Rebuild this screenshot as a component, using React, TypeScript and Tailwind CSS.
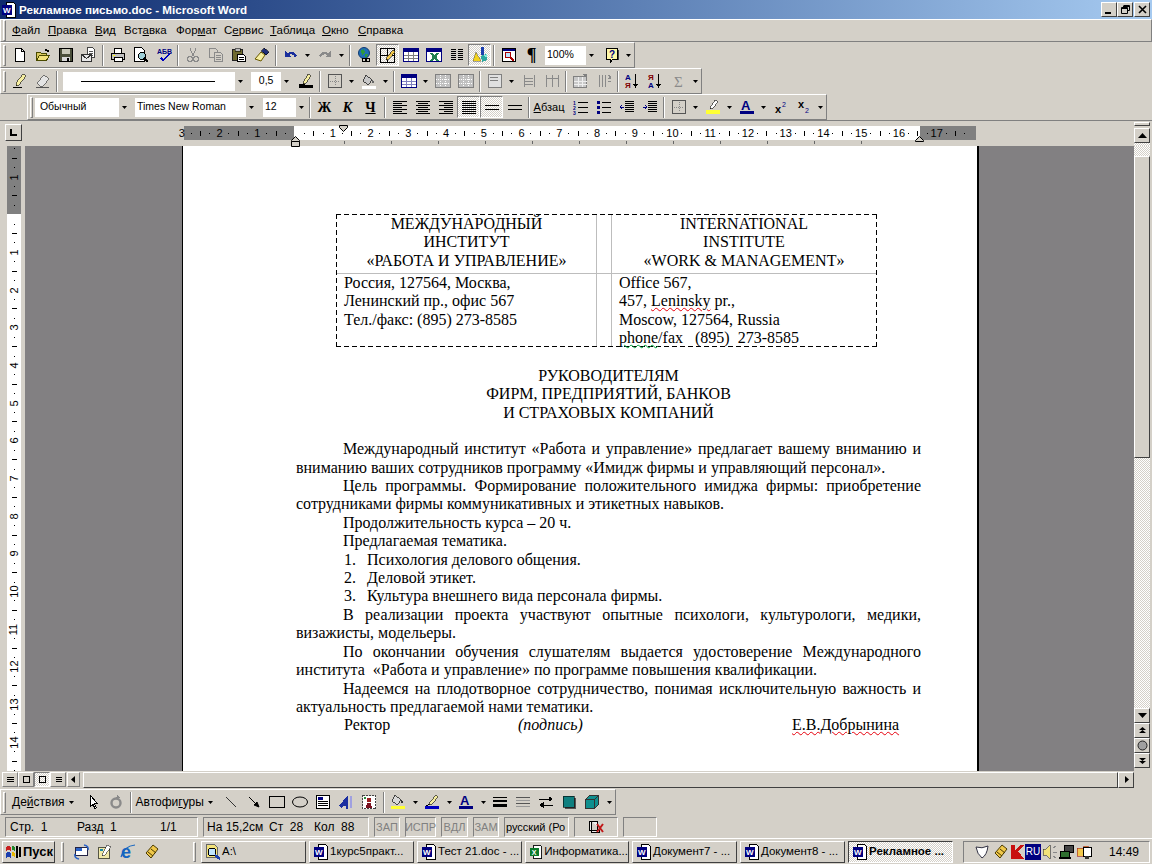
import type { ReactNode } from 'react';

const raised = 'border border-t-white border-l-white border-r-[#808080] border-b-[#808080]';
const raised2 = 'border border-t-white border-l-white border-r-[#404040] border-b-[#404040]';
const sunken = 'border border-t-[#808080] border-l-[#808080] border-r-white border-b-white';
const dither = 'bg-[repeating-conic-gradient(#ffffff_0_25%,#d4d0c8_0_50%)] bg-[length:2px_2px]';

const Svg = ({ children, w = 16, h = 16 }: { children: ReactNode; w?: number; h?: number }) => (
  <svg width={w} height={h} viewBox={`0 0 ${w} ${h}`} shapeRendering="crispEdges">
    {children}
  </svg>
);

const page = (
  <>
    <path d="M3.500 1.500h6l3 3v10h-9z" fill="#fff" stroke="#000" />
    <path d="M9.500 1.500v3h3" fill="none" stroke="#000" />
  </>
);
const lines = (x: number, y: number, w: number, n: number, c = '#000', step = 2) =>
  Array.from({ length: n }, (_, i) => <rect key={i} x={x} y={y + i * step} width={w} height={1} fill={c} />);
const rows = (xs: number[], ws: number[]) =>
  xs.map((x, i) => <rect key={i} x={x} y={2 + i * 2} width={ws[i]} height="1" fill="#000" />);

const icons: Record<string, ReactNode> = {
  new: page,
  open: (
    <>
      <path d="M1.500 5.500h4l1 1h5v7h-10z" fill="#d8c860" stroke="#4a4a00" />
      <path d="M4.500 8.500h10l-3 5h-10z" fill="#f2e27a" stroke="#4a4a00" />
      <path d="M9 3q2-2 4 0l1-1v3h-3l1-1q-1-1-2 0z" fill="#000" />
    </>
  ),
  save: (
    <>
      <path d="M1.500 1.500h13v13h-13z" fill="#4a4f3a" stroke="#000" />
      <rect x="4" y="2" width="8" height="5" fill="#c8c8b8" />
      <rect x="4" y="10" width="8" height="4" fill="#d8d8d8" />
      <rect x="9" y="11" width="2" height="3" fill="#000" />
    </>
  ),
  email: (
    <>
      <path d="M6.500 .5h5l2 2v8h-7z" fill="#fff" stroke="#444" />
      {lines(8, 4, 4, 3, '#555')}
      <path d="M.5 7.500h10v7h-10z" fill="#e8e8e8" stroke="#333" />
      <path d="M.5 7.500l5 4 5-4" fill="none" stroke="#333" />
    </>
  ),
  print: (
    <>
      <path d="M4.500 1.500h7v5h-7z" fill="#fff" stroke="#000" />
      <path d="M1.500 6.500h13v6h-13z" fill="#c0c0c0" stroke="#000" />
      <path d="M4.500 10.500h8v4h-8z" fill="#fff" stroke="#000" />
      <rect x="3" y="8" width="2" height="1" fill="#ff0" />
    </>
  ),
  preview: (
    <>
      <path d="M1.500 .5h7l3 3v11h-10z" fill="#fff" stroke="#000" />
      <circle cx="9" cy="9" r="3.500" fill="#9fd0d8" stroke="#000" />
      <path d="M11 11l4 4" stroke="#000" strokeWidth="2" />
    </>
  ),
  spell: (
    <>
      <text x="1" y="7" fontSize="7" fontFamily="Liberation Sans" fontWeight="700" fill="#000080">АБВ</text>
      <path d="M4 11l3 4 7-8-1-1-6 6-2-2z" fill="#0000c0" />
    </>
  ),
  cut: (
    <>
      <path d="M5 1l3 8M11 1l-3 8" stroke="#8a8a8a" fill="none" />
      <circle cx="5" cy="12" r="2.500" fill="none" stroke="#8a8a8a" strokeWidth="1.500" />
      <circle cx="11" cy="12" r="2.500" fill="none" stroke="#8a8a8a" strokeWidth="1.500" />
    </>
  ),
  copy: (
    <>
      <path d="M1.500 1.500h6l2 2v7h-8z" fill="#d4d0c8" stroke="#8a8a8a" />
      <path d="M6.500 5.500h6l2 2v7h-8z" fill="#d4d0c8" stroke="#8a8a8a" />
      {lines(8, 8, 5, 3, '#8a8a8a')}
    </>
  ),
  paste: (
    <>
      <path d="M1.500 2.500h10v11h-10z" fill="#6f6a30" stroke="#222" />
      <rect x="4" y="1" width="5" height="3" fill="#bbb" stroke="#000" strokeWidth=".5" />
      <path d="M6.500 7.500h6l2 2v5h-8z" fill="#fff" stroke="#000" />
      {lines(8, 10, 5, 2, '#000')}
    </>
  ),
  painter: (
    <>
      <path d="M10 1l5 4-3 3-5-4z" fill="#1f2f78" stroke="#000" strokeWidth=".6" />
      <path d="M7 5l4 3-4 6-6-2z" fill="#f6eea0" stroke="#6a5a00" shapeRendering="auto" />
    </>
  ),
  undo: <path d="M2 4v6h6l-2-2q3-2 6 2l2-1Q10 2 5 6z" fill="#1a2e9c" />,
  redo: <path d="M14 4v6H8l2-2q-3-2-6 2L2 9q4-7 9-3z" fill="#8a8a8a" />,
  web: (
    <>
      <circle cx="7" cy="6" r="5.500" fill="#1f6fb5" stroke="#123a70" shapeRendering="auto" />
      <path d="M4 3l3-1 1 3-3 3zM8 7l3 0-1 3-2 0z" fill="#2d9a3c" />
      <circle cx="7" cy="13" r="2" fill="none" stroke="#000" />
      <circle cx="11" cy="13" r="2" fill="none" stroke="#000" />
    </>
  ),
  tableBorders: (
    <>
      <path d="M.5 1.500h14v14H.5z" fill="none" stroke="#000" />
      <path d="M7.500 1.500v14M.5 8.500h14" stroke="#000" />
      <path d="M13 3l2 2-6 7-3 1 1-3z" fill="#f2c84b" stroke="#000" strokeWidth=".6" />
    </>
  ),
  insTable: (
    <>
      <path d="M.5 1.500h15v13H.5z" fill="#fff" stroke="#000080" />
      <rect x="1" y="2" width="14" height="3" fill="#000080" />
      <path d="M5.500 5v9M10.500 5v9M1 8.500h14M1 11.500h14" stroke="#808080" />
    </>
  ),
  excel: (
    <>
      <path d="M.5 1.500h15v13H.5z" fill="#fff" stroke="#000080" />
      <rect x="1" y="2" width="14" height="3" fill="#000080" />
      <path d="M5 6l7 8M12 6l-7 8" stroke="#208050" strokeWidth="2.500" />
    </>
  ),
  columns: (
    <>
      {lines(2, 2, 5, 6, '#000')}
      {lines(9, 2, 5, 6, '#000')}
    </>
  ),
  drawing: (
    <>
      <path d="M9 0h3v8H9z" fill="#1b3fae" />
      <path d="M4 5l5 9H1z" fill="#f2d21a" stroke="#555" strokeWidth=".5" />
      <path d="M9 9l5-2 1 6-5 2z" fill="#2aa8a0" />
      <path d="M11 9l4-2v3z" fill="#8ed" />
    </>
  ),
  map: (
    <>
      <path d="M1.500 1.500h13v13h-13z" fill="#fff" stroke="#000" />
      <rect x="2" y="2" width="12" height="2" fill="#000080" />
      <circle cx="7" cy="8" r="3" fill="#bfe4ff" stroke="#a00" />
      <path d="M9 10l4 4" stroke="#a00" strokeWidth="2" />
    </>
  ),
  help: (
    <>
      <path d="M2.500 1.500h11v11h-5l-2 3v-3h-4z" fill="#fff8a8" stroke="#000" />
      <rect x="14" y="3" width="1" height="10" fill="#444" />
      <text x="5" y="11" fontSize="10" fontWeight="700" fontFamily="Liberation Sans" fill="#000080">?</text>
    </>
  ),
  pencil: (
    <>
      <path d="M1 14h9" stroke="#000" />
      <path d="M11 1l3 2-7 9-3 1 0-3z" fill="#f6eea0" stroke="#000" strokeWidth=".6" />
    </>
  ),
  eraser: (
    <>
      <path d="M1 14h13" stroke="#555" />
      <path d="M9 2l5 4-6 7H5L2 10z" fill="#e4e4e4" stroke="#555" strokeWidth=".8" />
    </>
  ),
  penColor: (
    <>
      <path d="M10 1l3 2-5 7-3 1 1-3z" fill="#f6eea0" stroke="#000" strokeWidth=".6" />
      <path d="M1 11h6" stroke="#000" />
      <rect x="1" y="12" width="14" height="3" fill="#000" />
    </>
  ),
  borders: (
    <>
      <path d="M1.500 1.500h13v13h-13z" fill="none" stroke="#555" />
      <path d="M8 3v10M3 8h10" stroke="#888" strokeDasharray="1 1" />
    </>
  ),
  fill: (
    <>
      <path d="M5 2l6 5-4 5-5-4z" fill="#c8c8c8" stroke="#222" strokeWidth=".8" />
      <path d="M11 7q3 2 2 4-2-1-2-4" fill="#666" />
      <rect x="1" y="13" width="14" height="3" fill="#fff" />
    </>
  ),
  fillY: (
    <>
      <path d="M5 1l6 5-4 5-5-4z" fill="#d8d8d8" stroke="#222" strokeWidth=".8" />
      <path d="M11 6q3 2 2 4-2-1-2-4" fill="#333" />
      <rect x="1" y="12" width="14" height="3" fill="#ffff33" />
    </>
  ),
  tableBlue: (
    <>
      <path d="M.5 1.500h15v13H.5z" fill="#fff" stroke="#000080" />
      <rect x="1" y="2" width="14" height="3" fill="#000080" />
      <path d="M5.500 5v9M10.500 5v9M1 8.500h14M1 11.500h14" stroke="#8080c0" />
    </>
  ),
  merge: (
    <>
      <path d="M.5 1.500h15v13H.5z" fill="#c0c0c0" stroke="#808080" />
      <path d="M5.500 2v12M10.500 2v12M1 6.500h14M1 10.500h14" stroke="#fff" strokeDasharray="1 1" />
    </>
  ),
  align: (
    <>
      <path d="M1.500 1.500h13v13h-13z" fill="#e0e0e0" stroke="#808080" />
      {lines(3, 4, 8, 2, '#808080', 3)}
    </>
  ),
  dist1: <path d="M3 2v12M13 2v12M4 5h8M4 8h8M4 11h8" stroke="#8a8a8a" />,
  dist2: <path d="M2 2v12M8 2v12M14 2v12M2 5h12" stroke="#8a8a8a" fill="none" />,
  auto: (
    <>
      <path d="M.5 3.500h13v11H.5z" fill="#c8c8c8" stroke="#808080" />
      <path d="M5 4v10M9 4v10M1 8h13M1 11h13" stroke="#eee" />
      <path d="M9 1l5 0 0 4z" fill="#808080" />
    </>
  ),
  dir: <path d="M3 2v12M6 2v12M9 2v12M12 5h3M12 8h3M12 2l3 2-3 2" stroke="#8a8a8a" fill="none" />,
  sortAz: (
    <>
      <text x="0" y="7" fontSize="8" fontWeight="700" fontFamily="Liberation Sans" fill="#000080">А</text>
      <text x="0" y="15" fontSize="8" fontWeight="700" fontFamily="Liberation Sans" fill="#800000">Я</text>
      <path d="M10 1h1v10h2l-2.500 4L8 11h2z" fill="#000" />
    </>
  ),
  sortZa: (
    <>
      <text x="0" y="7" fontSize="8" fontWeight="700" fontFamily="Liberation Sans" fill="#800000">Я</text>
      <text x="0" y="15" fontSize="8" fontWeight="700" fontFamily="Liberation Sans" fill="#000080">А</text>
      <path d="M10 1h1v10h2l-2.500 4L8 11h2z" fill="#000" />
    </>
  ),
  sum: <text x="3" y="14" fontSize="15" fontFamily="Liberation Serif" fill="#8a8a8a">Σ</text>,
  left: <>{rows([1, 1, 1, 1, 1, 1, 1], [14, 9, 14, 9, 14, 9, 14])}</>,
  center: <>{rows([1, 3, 1, 3, 1, 3, 1], [14, 10, 14, 10, 14, 10, 14])}</>,
  right: <>{rows([1, 6, 1, 6, 1, 6, 1], [14, 9, 14, 9, 14, 9, 14])}</>,
  justify: <>{lines(1, 2, 14, 7)}</>,
  line1: (
    <>
      <rect x="1" y="6" width="14" height="1" fill="#000" />
      <rect x="1" y="10" width="14" height="1" fill="#000" />
    </>
  ),
  numList: (
    <>
      <text x="0" y="6" fontSize="5" fill="#000080" fontWeight="700">1</text>
      <text x="0" y="11" fontSize="5" fill="#000080" fontWeight="700">2</text>
      <text x="0" y="16" fontSize="5" fill="#000080" fontWeight="700">3</text>
      {lines(5, 3, 10, 3, '#000', 5)}
    </>
  ),
  bullets: (
    <>
      <rect x="1" y="2" width="3" height="3" fill="#000080" />
      <rect x="1" y="7" width="3" height="3" fill="#000080" />
      <rect x="1" y="12" width="3" height="3" fill="#000080" />
      {lines(6, 3, 9, 3, '#000', 5)}
    </>
  ),
  outdent: (
    <>
      {lines(6, 2, 9, 6, '#000')}
      <path d="M5 8L1 8M3 6L1 8l2 2" stroke="#000080" fill="none" />
    </>
  ),
  indent: (
    <>
      {lines(6, 2, 9, 6, '#000')}
      <path d="M1 8h4M3 6l2 2-2 2" stroke="#000080" fill="none" />
    </>
  ),
  highlight: (
    <>
      <path d="M10 1l3 2-5 6-3 1 1-3z" fill="#fff" stroke="#000" strokeWidth=".6" />
      <rect x="1" y="11" width="14" height="4" fill="#ffff33" />
    </>
  ),
  fontColor: (
    <>
      <text x="2" y="11" fontSize="13" fontWeight="700" fontFamily="Liberation Sans" fill="#000080">A</text>
      <rect x="1" y="12" width="14" height="3" fill="#000080" />
    </>
  ),
  sup: (
    <>
      <text x="2" y="14" fontSize="11" fontWeight="700" fontFamily="Liberation Sans">x</text>
      <text x="9" y="8" fontSize="7" fontFamily="Liberation Sans" fill="#000080">2</text>
    </>
  ),
  sub: (
    <>
      <text x="2" y="9" fontSize="11" fontWeight="700" fontFamily="Liberation Sans">x</text>
      <text x="9" y="14" fontSize="7" fontFamily="Liberation Sans" fill="#000080">2</text>
    </>
  ),
  cursor: <path d="M5.500 1.500v11l2.500-2 2 4 1.500-.8-2-4h3z" fill="#fff" stroke="#000" />,
  rotate: (
    <>
      <circle cx="8" cy="9" r="4.500" fill="none" stroke="#8a8a8a" strokeWidth="2.400" shapeRendering="auto" />
      <path d="M9 1l3 3-4 1z" fill="#8a8a8a" />
    </>
  ),
  line: <path d="M3 3l10 10" stroke="#333" shapeRendering="auto" />,
  arrowLine: <path d="M3 3l8 8M13 13l-5-2 3-3z" stroke="#000" fill="#000" shapeRendering="auto" />,
  rect: <path d="M.5 2.500h15v11H.5z" fill="none" stroke="#000" />,
  oval: <ellipse cx="8" cy="8" rx="7.500" ry="5" fill="none" stroke="#000" shapeRendering="auto" />,
  textbox: (
    <>
      <path d="M1.500 1.500h13v13h-13z" fill="#fff" stroke="#000" />
      <rect x="3" y="3" width="5" height="3" fill="#000080" />
      {lines(3, 7, 10, 3, '#000')}
    </>
  ),
  wordart: (
    <>
      <path d="M1 12L10 1v14H8v-3H5l-1 2z" fill="#1b2fa0" />
      <path d="M12 2h2v12h-2z" fill="#a0a0e0" />
    </>
  ),
  clipart: (
    <>
      <path d="M1.500 1.500h13v13h-13z" fill="#fff" stroke="#444" strokeDasharray="2 1" />
      <circle cx="8" cy="6" r="2.500" fill="#9a2020" />
      <path d="M5 14l1-5h4l1 5z" fill="#7a1020" />
      <rect x="3" y="3" width="2" height="2" fill="#2a8a3a" />
    </>
  ),
  penBlue: (
    <>
      <path d="M12 1l2 2-6 7-3 1 1-3z" fill="#f6eea0" stroke="#000" strokeWidth=".6" />
      <path d="M2 12q3-2 3-1" stroke="#000" fill="none" />
      <rect x="1" y="12" width="14" height="3" fill="#0000c0" />
    </>
  ),
  lineStyle: (
    <>
      <rect x="1" y="3" width="14" height="1" fill="#000" />
      <rect x="1" y="6" width="14" height="2" fill="#000" />
      <rect x="1" y="10" width="14" height="3" fill="#000" />
    </>
  ),
  dash: <>{[3, 6, 9, 12].map(y => <rect key={y} x="1" y={y} width="14" height="1" fill={y % 2 ? '#555' : '#999'} />)}</>,
  arrows: <path d="M1 5h13M14 5l-3-2v4zM15 11H2M2 11l3-2v4z" stroke="#000" fill="#000" />,
  shadow: (
    <>
      <rect x="4" y="4" width="11" height="11" fill="#555" />
      <rect x="2" y="2" width="11" height="11" fill="#0f7f7f" stroke="#000" strokeWidth=".6" />
    </>
  ),
  cube: <path d="M1.500 5.500l4-4h9v9l-4 4h-9z M1.500 5.500h9v9 M10.500 5.500l4-4" fill="#0f8f8f" stroke="#333" />,
  doc: (
    <>
      <path d="M5.500 .5h7l2 2v13h-9z" fill="#fff" stroke="#000" />
      <rect x="1" y="3" width="10" height="10" fill="#000080" />
      <text x="2" y="11" fontSize="8" fontWeight="700" fontFamily="Liberation Sans" fill="#fff">W</text>
    </>
  ),
  xls: (
    <>
      <path d="M5.500 .5h7l2 2v13h-9z" fill="#fff" stroke="#000" />
      <rect x="1" y="3" width="10" height="10" fill="#0a7a2a" />
      <text x="3" y="11" fontSize="8" fontWeight="700" fontFamily="Liberation Sans" fill="#fff">X</text>
    </>
  ),
  drive: (
    <>
      <path d="M1.500 .5h8l3 3v10h-11z" fill="#f2e27a" stroke="#666" />
      <circle cx="7" cy="8" r="4" fill="#bfe4ff" stroke="#000" />
      <path d="M10 11l5 4" stroke="#1b3fae" strokeWidth="2.500" />
    </>
  ),
  start: (
    <>
      <path d="M0 3l2-1 3 1v4l-3-1-2 1z" fill="#c81e1e" />
      <path d="M0 9l2-1 3 1v5l-3-1-2 1z" fill="#1b3fae" />
      <path d="M6 2l3 1v4l-3-1z" fill="#22882a" />
      <path d="M6 8l3 1v4l-3-1z" fill="#e6b800" />
      <path d="M10 2h2v12h-2zM13 3h2v10h-2z" fill="#000" />
    </>
  ),
  q1: (
    <>
      <path d="M1.500 3.500h12v8h-12z" fill="#fff" stroke="#224" />
      <rect x="2" y="4" width="6" height="3" fill="#2a62c8" />
      <path d="M10 1q5 1 4 5M5 15q-5-1-4-5" fill="none" stroke="#2a62c8" strokeWidth="1.500" shapeRendering="auto" />
    </>
  ),
  q2: (
    <>
      <path d="M1.500 3.500h11v11h-11z" fill="#f0e8a8" stroke="#554" />
      <path d="M10 1l4 2-6 8-3 1 1-3z" fill="#fff" stroke="#000" strokeWidth=".5" />
      <rect x="3" y="5" width="3" height="2" fill="#1a8aa8" />
    </>
  ),
  ie: (
    <>
      <text x="1" y="14" fontSize="18" fontWeight="700" fontFamily="Liberation Sans" fill="#1565c0">e</text>
      <path d="M1 13Q4 2 15 1" fill="none" stroke="#1565c0" strokeWidth="1.200" shapeRendering="auto" />
    </>
  ),
  pencilY: <path d="M3 9L10 1l5 4-7 9zM5 8l5 4M8 5l5 4" fill="#f0c84a" stroke="#4a3a00" shapeRendering="auto" />,
  shield: <path d="M2 3q6 2 12-1-1 9-6 12Q3 10 2 3z" fill="#fff" stroke="#334" shapeRendering="auto" />,
  kav: <path d="M2 1h4v5l5-5h4L9 7l6 8H2z" fill="#c81010" />,
  speaker: (
    <>
      <path d="M1 5h3l4-4v14l-4-4H1z" fill="#f2e27a" stroke="#333" strokeWidth=".6" />
      <path d="M11 4l3-2M11 8h4M11 12l3 2" stroke="#888" />
    </>
  ),
  net: (
    <>
      <rect x="5" y="1" width="9" height="7" fill="#444" stroke="#000" />
      <rect x="1" y="7" width="9" height="6" fill="#2f6f2f" stroke="#000" />
      <rect x="0" y="13" width="12" height="2" fill="#000" />
    </>
  ),
  screen: (
    <>
      <path d="M1 4h6l1-2h4v10H1z" fill="#f2c84b" stroke="#a02020" strokeWidth=".6" />
      <rect x="7" y="3" width="8" height="9" fill="#fff" stroke="#000" />
      <rect x="9" y="12" width="4" height="3" fill="#333" />
    </>
  ),
  book: (
    <>
      <path d="M1.500 2.500h8v9h-8zM3.500 2.500v11h8v-3" fill="#eee" stroke="#000" />
      <path d="M9 5l6 8M15 5l-6 8" stroke="#c01818" strokeWidth="2" shapeRendering="auto" />
    </>
  ),
};

const Icon = ({ n }: { n: string }) => <Svg>{icons[n]}</Svg>;

const Caret = () => (
  <svg width="5" height="3" viewBox="0 0 5 3">
    <path d="M0 0h5L2.500 3z" fill="#000" />
  </svg>
);

const T = ({ n, active }: { n: string; active?: boolean }) => (
  <div className={`flex h-[22px] w-[23px] shrink-0 items-center justify-center ${active ? `${sunken} ${dither}` : ''}`}>
    <Icon n={n} />
  </div>
);

const A = () => (
  <div className="flex h-[22px] w-[11px] shrink-0 items-center justify-center">
    <Caret />
  </div>
);

const Sep = () => (
  <div className="mx-[2px] h-[21px] w-[2px] shrink-0 border-l border-r border-l-[#808080] border-r-white" />
);

const Handle = () => <div className={`mx-[2px] h-[21px] w-[3px] shrink-0 ${raised}`} />;

const Combo = ({ w, label, children }: { w: number; label?: string; children?: ReactNode }) => (
  <div className="flex h-[19px] shrink-0 items-center bg-white pl-[2px]" style={{ width: w }}>
    <div className="flex flex-1 items-center whitespace-pre text-[10.5px]">{label}{children}</div>
    <div className="flex h-[19px] w-[11px] items-center justify-center bg-[#d4d0c8]">
      <Caret />
    </div>
  </div>
);

const Toolbar = ({ children, offset = 0 }: { children: ReactNode; offset?: number }) => (
  <div className="flex h-[26px] shrink-0 items-center" style={{ paddingLeft: offset }}>
    <div className={`flex h-[26px] items-center ${raised}`}>{children}</div>
  </div>
);

const MenuItem = ({ pre, u, post, w }: { pre: string; u: string; post: string; w: number }) => (
  <span className="shrink-0" style={{ width: w }}>
    {pre}<span className="underline">{u}</span>{post}
  </span>
);

const rulerSlots = (label: string | number, vertical = false) => {
  const slot = vertical ? 'flex h-[9.43px] w-full items-center justify-center' : 'flex h-full w-[9.43px] items-center justify-center';
  return (
    <>
      <div className={slot}>
        {label !== '' && (
          <span className={`text-[11px] leading-none ${vertical ? '-rotate-90' : ''}`}>{label}</span>
        )}
      </div>
      <div className={slot}><div className="h-px w-px bg-black" /></div>
      <div className={slot}><div className={vertical ? 'h-px w-[5px] bg-black' : 'h-[5px] w-px bg-black'} /></div>
      <div className={slot}><div className="h-px w-px bg-black" /></div>
    </>
  );
};

const hLabels: (string | number)[] = [3, 2, 1, '', 1, 2, 3, 4, 5, 6, 7, 8, 9, 10, 11, 12, 13, 14, 15, 16, 17];
const vLabels: (string | number)[] = ['', 1, '', 1, 2, 3, 4, 5, 6, 7, 8, 9, 10, 11, 12, 13, 14, ''];

const HRuler = () => (
  <div className="relative h-full flex-1">
    <div className="pl-[5px] pt-[3px]">
      <div className={`flex h-[17px] w-[17px] items-center justify-center ${raised2}`}>
        <div className="h-[7px] w-[7px] border-b-2 border-l-2 border-black" />
      </div>
    </div>
    <div className="absolute left-[184px] top-[5px] h-[14px] w-[792px] bg-[linear-gradient(to_right,#808080_110px,#ffffff_110px,#ffffff_736px,#808080_736px)]">
      <div className="-ml-[7px] flex h-full">
        {hLabels.map((l, i) => (
          <div key={i} className="flex h-full w-[37.75px] shrink-0">{rulerSlots(l)}</div>
        ))}
      </div>
    </div>
    {/* default tab stops under the ruler */}
    <div className="absolute left-[344px] top-[20px] flex">
      {Array.from({ length: 12 }, (_, i) => (
        <div key={i} className="w-[47px]"><div className="h-[3px] w-px bg-[#666]" /></div>
      ))}
    </div>
    {/* indent markers */}
    <svg className="absolute left-[290px] top-[13px]" width="11" height="13" viewBox="0 0 11 13">
      <path d="M1.500 6.500l4-4 4 4v1h-8z" fill="#d4d0c8" stroke="#000" />
      <path d="M1.500 7.500h8v5h-8z" fill="#d4d0c8" stroke="#000" />
    </svg>
    <svg className="absolute left-[338px] top-[3px]" width="11" height="9" viewBox="0 0 11 9">
      <path d="M1.500 1.500h8v2l-4 4-4-4z" fill="#d4d0c8" stroke="#000" />
    </svg>
    <svg className="absolute left-[914px] top-[13px]" width="11" height="8" viewBox="0 0 11 8">
      <path d="M1.500 6.500l4-4 4 4v1h-8z" fill="#d4d0c8" stroke="#000" />
    </svg>
  </div>
);

const VRuler = () => (
  <div className="ml-[7px] mr-[4px] h-full w-[14px] shrink-0 overflow-hidden bg-[linear-gradient(to_bottom,#808080_68px,#ffffff_68px)]">
    <div className="-mt-[11.4px] flex flex-col">
      {vLabels.map((l, i) => (
        <div key={i} className="flex w-full shrink-0 flex-col">{rulerSlots(l, true)}</div>
      ))}
    </div>
  </div>
);

type Line = { t: string; indent?: boolean; j?: boolean; n?: string };

const body: Line[] = [
  { t: 'Международный институт «Работа и управление» предлагает вашему вниманию и', indent: true, j: true },
  { t: 'вниманию ваших сотрудников программу «Имидж фирмы и управляющий персонал».' },
  { t: 'Цель программы. Формирование положительного имиджа фирмы: приобретение', indent: true, j: true },
  { t: 'сотрудниками фирмы коммуникативных и этикетных навыков.' },
  { t: 'Продолжительность курса – 20 ч.', indent: true },
  { t: 'Предлагаемая тематика.', indent: true },
  { t: 'Психология делового общения.', n: '1.' },
  { t: 'Деловой этикет.', n: '2.' },
  { t: 'Культура внешнего вида персонала фирмы.', n: '3.' },
  { t: 'В реализации проекта участвуют опытные психологи, культурологи, медики,', indent: true, j: true },
  { t: 'визажисты, модельеры.' },
  { t: 'По окончании обучения слушателям выдается удостоверение Международного', indent: true, j: true },
  { t: 'института  «Работа и управление» по программе повышения квалификации.' },
  { t: 'Надеемся на плодотворное сотрудничество, понимая исключительную важность и', indent: true, j: true },
  { t: 'актуальность предлагаемой нами тематики.' },
];

const red = 'underline decoration-wavy decoration-red-600 decoration-1';
const green = 'underline decoration-wavy decoration-green-600 decoration-1';

const DocPage = () => (
  <div className="h-full w-[797px] shrink-0 overflow-hidden border-l border-r-2 border-l-black border-r-black bg-white pl-[113px] pt-[68px] font-['Liberation_Serif'] text-[16px] leading-[18.4px] text-black">
    <div className="ml-[40px] flex w-[541px] p-px [background:repeating-linear-gradient(to_right,#000_0_5px,transparent_5px_8px)_top/100%_1px_no-repeat,repeating-linear-gradient(to_right,#000_0_5px,transparent_5px_8px)_bottom/100%_1px_no-repeat,repeating-linear-gradient(to_bottom,#000_0_5px,transparent_5px_8px)_left/1px_100%_no-repeat,repeating-linear-gradient(to_bottom,#000_0_5px,transparent_5px_8px)_right/1px_100%_no-repeat]">
      <div className="w-[259px] shrink-0">
        <div className="h-[59px] border-b border-[#bdbdbd] text-center">
          <div>МЕЖДУНАРОДНЫЙ</div>
          <div>ИНСТИТУТ</div>
          <div>«РАБОТА И УПРАВЛЕНИЕ»</div>
        </div>
        <div className="pl-[7px]">
          <div>Россия, 127564, Москва,</div>
          <div>Ленинский пр., офис 567</div>
          <div>Тел./факс: (895) 273-8585</div>
        </div>
      </div>
      <div className="w-[16px] shrink-0 border-l border-r border-[#bdbdbd]">
        <div className="h-[59px] border-b border-[#bdbdbd]" />
      </div>
      <div className="flex-1">
        <div className="h-[59px] border-b border-[#bdbdbd] text-center">
          <div>INTERNATIONAL</div>
          <div>INSTITUTE</div>
          <div>«WORK &amp; MANAGEMENT»</div>
        </div>
        <div className="h-[72px] pl-[7px]">
          <div>Office 567,</div>
          <div>457, <span className={red}>Leninsky</span> pr.,</div>
          <div>Moscow, 127564, Russia</div>
          <div><span className={green}>phone</span>/fax&nbsp;&nbsp; (895)&nbsp; 273-8585</div>
        </div>
      </div>
    </div>
    <div className="mt-[20px] w-[625px] text-center">
      <div>РУКОВОДИТЕЛЯМ</div>
      <div>ФИРМ, ПРЕДПРИЯТИЙ, БАНКОВ</div>
      <div>И СТРАХОВЫХ КОМПАНИЙ</div>
    </div>
    <div className="mt-[18px] w-[625px]">
      {body.map((l, i) =>
        l.n ? (
          <div key={i} className="flex pl-[48px]">
            <span className="w-[23px]">{l.n}</span>
            <span>{l.t}</span>
          </div>
        ) : (
          <div key={i} className={`${l.indent ? 'pl-[47px]' : ''} ${l.j ? '[text-align-last:justify]' : ''} whitespace-pre-wrap`}>
            {l.t}
          </div>
        ),
      )}
      <div className="flex pl-[48px]">
        <span className="w-[174px]">Ректор</span>
        <span className="w-[274px] italic">(подпись)</span>
        <span className={red}>Е.В.Добрынина</span>
      </div>
    </div>
  </div>
);

const Glyph = ({ d, h = 7 }: { d: string; h?: number }) => (
  <svg width="9" height={h} viewBox={`0 0 9 ${h}`}>
    <path d={d} fill="#000" />
  </svg>
);

const SB = ({ children }: { children: ReactNode }) => (
  <div className={`flex h-[15px] w-[16px] shrink-0 items-center justify-center bg-[#d4d0c8] ${raised2}`}>{children}</div>
);

const VScroll = () => (
  <div className="flex h-full w-[18px] shrink-0 flex-col pr-[2px]">
    <div className={`flex flex-1 flex-col ${dither}`}>
      <div className={`mt-[10px] h-[302px] w-full shrink-0 bg-[#d4d0c8] ${raised2}`} />
    </div>
    <SB><Glyph d="M0 1h9L4.500 6z" /></SB>
    <SB><Glyph d="M4.500 0L8 3H1zM4.500 3L8 6H1z" /></SB>
    <SB>
      <svg width="11" height="11" viewBox="0 0 11 11">
        <circle cx="5.500" cy="5.500" r="4.500" fill="#a0a0a0" stroke="#222" />
      </svg>
    </SB>
    <SB><Glyph d="M1 1h7L4.500 4zM1 4h7L4.500 7z" /></SB>
    <div className="h-[3px] shrink-0" />
  </div>
);

const ViewBtn = ({ active, children }: { active?: boolean; children: ReactNode }) => (
  <div className={`flex h-[15px] w-[16px] shrink-0 items-center justify-center ${active ? `${sunken} ${dither}` : raised}`}>{children}</div>
);

const TaskBtn = ({ icon, label, w, active }: { icon: string; label: string; w: number; active?: boolean }) => (
  <div
    className={`flex h-[22px] shrink-0 items-center gap-[1px] overflow-hidden whitespace-nowrap pl-[3px] text-[11.5px] ${active ? `${dither} border border-t-[#404040] border-l-[#404040] border-r-white border-b-white font-bold` : raised2}`}
    style={{ width: w }}
  >
    <Icon n={icon} />
    <span>{label}</span>
  </div>
);

export default function App() {
  return (
    <div className="flex h-[864px] w-[1152px] flex-col overflow-hidden bg-[#d4d0c8] font-['Liberation_Sans'] text-[12px] text-black">
      {/* title bar */}
      <div className="flex h-[19px] shrink-0 items-center bg-gradient-to-r from-[#0f2a6e] to-[#a6caf0] pl-[1px] pr-[2px]">
        <Icon n="doc" />
        <span className="ml-[2px] flex-1 text-[11.6px] font-bold text-white">Рекламное письмо.doc - Microsoft Word</span>
        {[
          <path key="a" d="M1 8h6v2H1z" fill="#000" />,
          <path key="b" d="M3.500 1.500h6v5h-2M1.500 3.500h6v6h-6z M3 2.500h6M1.500 4.500h6" fill="none" stroke="#000" />,
          <path key="c" d="M2 2l7 7M9 2l-7 7" stroke="#000" strokeWidth="1.600" />,
        ].map((p, i) => (
          <div key={i} className={`flex h-[15px] w-[16px] items-center justify-center bg-[#d4d0c8] ${raised2} ${i === 2 ? 'ml-[1px]' : ''}`}>
            <svg width="11" height="11" viewBox="0 0 11 11">{p}</svg>
          </div>
        ))}
      </div>
      {/* menu */}
      <div className={`flex h-[23px] shrink-0 items-center ${raised}`}>
        <Handle />
        <div className="ml-[4px] flex items-center text-[11.5px]">
          <MenuItem pre="" u="Ф" post="айл" w={36} />
          <MenuItem pre="" u="П" post="равка" w={47} />
          <MenuItem pre="" u="В" post="ид" w={29} />
          <MenuItem pre="Вст" u="а" post="вка" w={52} />
          <MenuItem pre="Фор" u="м" post="ат" w={48} />
          <MenuItem pre="С" u="е" post="рвис" w={46} />
          <MenuItem pre="" u="Т" post="аблица" w={52} />
          <MenuItem pre="" u="О" post="кно" w={36} />
          <MenuItem pre="" u="С" post="правка" w={50} />
        </div>
      </div>
      {/* standard toolbar */}
      <Toolbar>
        <Handle />
        <T n="new" /><T n="open" /><T n="save" /><T n="email" />
        <Sep />
        <T n="print" /><T n="preview" /><T n="spell" />
        <Sep />
        <T n="cut" /><T n="copy" /><T n="paste" /><T n="painter" />
        <Sep />
        <T n="undo" /><A /><T n="redo" /><A />
        <Sep />
        <T n="web" /><T n="tableBorders" active /><T n="insTable" /><T n="excel" /><T n="columns" /><T n="drawing" active />
        <Sep />
        <T n="map" />
        <div className="flex h-[22px] w-[23px] items-center justify-center font-['Liberation_Serif'] text-[18px] font-bold">¶</div>
        <div className="ml-[2px]"><Combo w={52} label="100%" /></div>
        <div className="w-[3px]" />
        <T n="help" /><A />
      </Toolbar>
      {/* tables and borders */}
      <Toolbar>
        <Handle />
        <T n="pencil" /><T n="eraser" />
        <Sep />
        <div className="ml-[3px]">
          <Combo w={183}><div className="ml-[16px] h-px w-[134px] bg-black" /></Combo>
        </div>
        <div className="ml-[5px]"><Combo w={41} label="  0,5" /></div>
        <div className="w-[2px]" />
        <T n="penColor" />
        <Sep />
        <T n="borders" /><A /><T n="fill" /><A />
        <Sep />
        <T n="tableBlue" /><A /><T n="merge" /><T n="merge" />
        <Sep />
        <T n="align" /><A /><T n="dist1" /><T n="dist2" />
        <Sep />
        <T n="auto" /><T n="dir" />
        <Sep />
        <T n="sortAz" /><T n="sortZa" /><T n="sum" /><A />
      </Toolbar>
      {/* formatting */}
      <Toolbar offset={27}>
        <Handle />
        <Combo w={95} label=" Обычный" />
        <div className="ml-[5px]"><Combo w={122} label="Times New Roman" /></div>
        <div className="ml-[6px]"><Combo w={44} label="12" /></div>
        <Sep />
        <div className="flex h-[22px] w-[23px] items-center justify-center font-['Liberation_Serif'] text-[14px] font-bold">Ж</div>
        <div className="flex h-[22px] w-[23px] items-center justify-center font-['Liberation_Serif'] text-[14px] font-bold italic">К</div>
        <div className="flex h-[22px] w-[23px] items-center justify-center font-['Liberation_Serif'] text-[14px] font-bold underline">Ч</div>
        <Sep />
        <T n="left" /><T n="center" /><T n="right" /><T n="justify" active /><T n="line1" active /><T n="line1" />
        <Sep />
        <span className="w-[34px] text-center text-[11px]"><span className="underline">А</span>бзац</span>
        <div className="w-[3px]" />
        <T n="numList" /><T n="bullets" /><T n="outdent" /><T n="indent" />
        <Sep />
        <T n="borders" /><A /><T n="highlight" /><A /><T n="fontColor" /><A /><T n="sup" /><T n="sub" /><A />
      </Toolbar>
      {/* ruler */}
      <div className="flex h-[26px] shrink-0 border-t border-t-[#808080]">
        <HRuler />
        <div className="flex w-[18px] shrink-0 flex-col pr-[2px]">
          <div className={`mt-px h-[4px] shrink-0 bg-[#d4d0c8] ${raised2}`} />
          <div className="h-[2px] shrink-0" />
          <SB><Glyph d="M4.500 1L9 6H0z" /></SB>
          <div className={`flex-1 ${dither}`} />
        </div>
      </div>
      {/* work area */}
      <div className="flex h-[625px] shrink-0">
        <VRuler />
        <div className="w-[157px] shrink-0 bg-[#828082]" />
        <DocPage />
        <div className="flex-1 bg-[#828082]" />
        <VScroll />
      </div>
      {/* horizontal scroll */}
      <div className="flex h-[17px] shrink-0 items-center pl-[2px]">
        <ViewBtn><div className="flex flex-col gap-[1px]">{[0, 1, 2].map(i => <div key={i} className="h-px w-[7px] bg-black" />)}</div></ViewBtn>
        <ViewBtn><div className="h-[7px] w-[7px] border border-black" /></ViewBtn>
        <ViewBtn active><div className="h-[7px] w-[7px] border border-black" /></ViewBtn>
        <ViewBtn><div className="flex flex-col gap-[1px]">{[0, 1, 2].map(i => <div key={i} className="ml-[1px] h-px w-[6px] bg-black" />)}</div></ViewBtn>
        <div className={`ml-px flex h-[15px] w-[13px] shrink-0 items-center justify-center ${raised}`}><Glyph d="M6 0v7L2 3.500z" /></div>
        <div className={`ml-[3px] h-[16px] w-[1035px] shrink-0 ${raised2}`} />
        <div className={`flex h-[16px] w-[16px] shrink-0 items-center justify-center ${raised2}`}><Glyph d="M3 0v7l4-3.500z" /></div>
      </div>
      <div className="h-px shrink-0" />
      {/* drawing toolbar */}
      <Toolbar>
        <Handle />
        <span className="ml-[4px] text-[12px]">Де<span className="underline">й</span>ствия</span>
        <span className="ml-[4px] mr-[8px] flex items-center"><Caret /></span>
        <T n="cursor" /><T n="rotate" />
        <Sep />
        <span className="ml-[2px] text-[12px]">Автофи<span className="underline">г</span>уры</span>
        <span className="ml-[4px] mr-[7px] flex items-center"><Caret /></span>
        <T n="line" /><T n="arrowLine" /><T n="rect" /><T n="oval" /><T n="textbox" /><T n="wordart" /><T n="clipart" />
        <Sep />
        <T n="fillY" /><A /><T n="penBlue" /><A /><T n="fontColor" /><A /><T n="lineStyle" /><T n="dash" /><T n="arrows" /><T n="shadow" /><T n="cube" /><A />
      </Toolbar>
      {/* status bar */}
      <div className="mt-[2px] flex h-[20px] shrink-0 gap-[5px] pl-[5px] text-[12px]">
        <div className={`flex w-[193px] items-center pl-[4px] ${sunken}`}>
          <span className="w-[67px] whitespace-pre">Стр.  1</span>
          <span className="w-[83px] whitespace-pre">Разд  1</span>
          <span>1/1</span>
        </div>
        <div className={`flex w-[166px] items-center pl-[3px] ${sunken}`}>
          <span className="w-[62px] whitespace-pre">На 15,2см</span>
          <span className="w-[45px] whitespace-pre">Ст  28</span>
          <span className="whitespace-pre">Кол  88</span>
        </div>
        {([['ЗАП', 26], ['ИСПР', 31], ['ВДЛ', 27], ['ЗАМ', 26]] as [string, number][]).map(([t, w]) => (
          <div key={t} className={`flex items-center justify-center text-[11px] text-[#808080] ${sunken}`} style={{ width: w }}>{t}</div>
        ))}
        <div className={`flex w-[65px] items-center pl-[1px] text-[11px] ${sunken}`}><span className="whitespace-nowrap">русский (Ро</span></div>
        <div className={`flex w-[44px] items-center justify-center ${sunken}`}><Icon n="book" /></div>
        <div className={`w-[34px] ${sunken}`} />
      </div>
      {/* taskbar */}
      <div className="mt-[1px] flex h-[26px] shrink-0 items-center border-t border-t-white pl-[2px] text-[12px]">
        <div className={`flex h-[22px] w-[53px] shrink-0 items-center gap-[1px] pl-[3px] text-[13px] font-bold ${raised2}`}>
          <Icon n="start" />Пуск
        </div>
        <div className={`ml-[6px] mr-[6px] h-[20px] w-[3px] shrink-0 ${raised}`} />
        <T n="q1" /><T n="q2" /><T n="ie" /><T n="pencilY" />
        <div className={`ml-[31px] mr-[5px] h-[20px] w-[3px] shrink-0 ${raised}`} />
        <div className="flex gap-[3px]">
          <TaskBtn icon="drive" label="A:\" w={105} />
          <TaskBtn icon="doc" label="1курс5практ..." w={105} />
          <TaskBtn icon="doc" label="Тест 21.doc - ..." w={105} />
          <TaskBtn icon="xls" label="Информатика..." w={104} />
          <TaskBtn icon="doc" label="Документ7 - ..." w={105} />
          <TaskBtn icon="doc" label="Документ8 - ..." w={105} />
          <TaskBtn icon="doc" label="Рекламное ..." w={105} active />
        </div>
        <div className={`ml-[10px] mr-[2px] flex h-[22px] flex-1 items-center pl-[10px] ${sunken}`}>
          <Icon n="shield" />
          <div className="w-[2px]" /><Icon n="pencilY" />
          <div className="w-[1px]" /><Icon n="kav" />
          <span className="flex h-[16px] w-[16px] items-center justify-center bg-[#000080] text-[10px] text-white">RU</span>
          <div className="w-[1px]" /><Icon n="speaker" />
          <div className="w-[1px]" /><Icon n="net" />
          <div className="w-[1px]" /><Icon n="screen" />
          <span className="ml-[17px]">14:49</span>
        </div>
      </div>
    </div>
  );
}
